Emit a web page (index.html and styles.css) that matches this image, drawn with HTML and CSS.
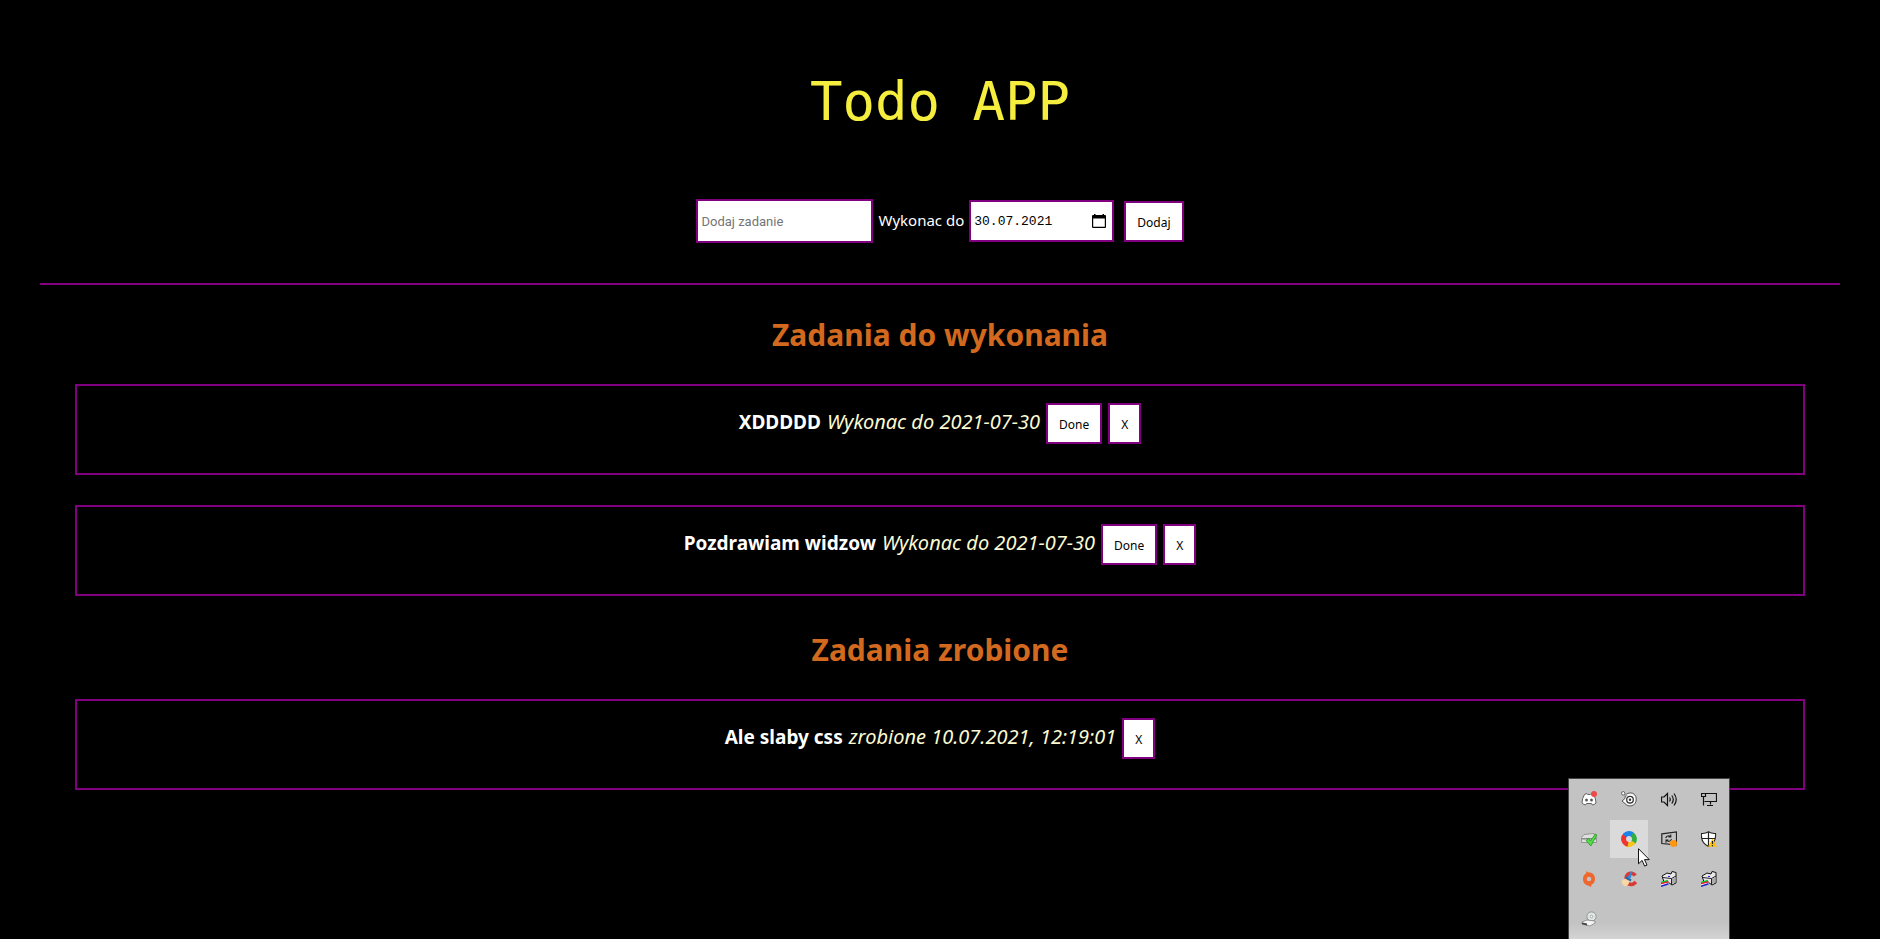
FILE: index.html
```html
<!DOCTYPE html>
<html lang="pl">
<head>
<meta charset="utf-8">
<title>Todo APP</title>
<link rel="stylesheet" href="styles.css">
</head>
<body>
<main class="app">
  <h1 class="title">Todo APP</h1>
  <form class="add-form">
    <input class="field task-input" type="text" placeholder="Dodaj zadanie" aria-label="Dodaj zadanie">
    <label class="date-label" for="deadline">Wykonac do</label>
    <span class="field date-field">
      <input class="date-input" id="deadline" type="text" value="30.07.2021">
      <button class="picker" type="button" aria-label="Kalendarz">
        <svg class="picker-icon" viewBox="0 0 14 15"><path fill="#000" fill-rule="evenodd" d="M2 0h1.500v1h7V0H12v1h1q1 0 1 1v11q0 1-1 1H1q-1 0-1-1V2q0-1 1-1h1zM1.200 4.500v8.300h11.600V4.500z"/></svg>
      </button>
    </span>
    <button class="btn add-btn" type="button">Dodaj</button>
  </form>

  <section class="group">
    <h2 class="heading">Zadania do wykonania</h2>
    <ul class="tasks">
      <li class="task"><strong class="name">XDDDDD</strong><em class="when">Wykonac do 2021-07-30</em><button class="btn" type="button">Done</button><button class="btn" type="button">X</button></li>
      <li class="task"><strong class="name">Pozdrawiam widzow</strong><em class="when">Wykonac do 2021-07-30</em><button class="btn" type="button">Done</button><button class="btn" type="button">X</button></li>
    </ul>
  </section>
  <section class="group">
    <h2 class="heading">Zadania zrobione</h2>
    <ul class="tasks">
      <li class="task"><strong class="name">Ale slaby css</strong><em class="when">zrobione 10.07.2021, 12:19:01</em><button class="btn" type="button">X</button></li>
    </ul>
  </section>
</main>

<aside class="tray">
  <span class="cell"><svg class="icon" viewBox="0 0 16 16"><path d="M3.500 3.500 6 2.500l.7 1h2.600l.7-1 2.500 1q2.500 4 2.500 8.500-1.500 1.500-3.500 2l-1-1.500h-5L4.500 14Q2.500 13.500 1 12q0-4.500 2.500-8.500z" fill="#fff" stroke="#555" stroke-width=".9"/><ellipse cx="5.500" cy="9" rx="1.400" ry="1.600" fill="#555"/><ellipse cx="10.500" cy="9" rx="1.400" ry="1.600" fill="#555"/><circle cx="13" cy="3" r="3" fill="#ee4a48"/></svg></span>
  <span class="cell"><svg class="icon" viewBox="0 0 16 16"><path d="M6.500 2.500q6-2 8.300 3 1.500 5.500-2.300 8.500-5 2.500-8.500-1.500L1 10l2.800-2.300q0-4 2.700-5.200z" fill="#fafafa" stroke="#444" stroke-width=".9"/><circle cx="9" cy="8.700" r="3.300" fill="#fff" stroke="#333" stroke-width="1.300"/><circle cx="9" cy="8.700" r="1.200" fill="#333"/><circle cx="2.200" cy="2.300" r="1.700" fill="#fff" stroke="#444" stroke-width=".8"/><circle cx="5" cy="4" r="1" fill="#fff" stroke="#555" stroke-width=".6"/></svg></span>
  <span class="cell"><svg class="icon line" viewBox="0 0 16 16"><path d="M.5 6v5H3l3.500 3.500v-12L3 6zM8.500 6.500q1.500 2 0 4M10.800 4.500q3 4 0 8M13 2.500q4.500 6 0 12"/></svg></span>
  <span class="cell"><svg class="icon line" viewBox="0 0 16 16"><path d="M4.500 2.500h11v8h-12M.5 2.500h4v3h-4zM2.500 5.500v9M9.500 10.500v3M6 14.500h6"/></svg></span>

  <span class="cell"><svg class="icon" viewBox="0 0 16 16"><path d="m3 3.500 10-1 2.500 4v5H.5v-5z" fill="#dedede" stroke="#888" stroke-width=".8"/><path d="M1 7h14v1.500H1z" fill="#888"/><path d="m5 9.500 2.500-2 2 2.500L14 3l2 1L9.800 15z" fill="#4fe044" stroke="#258a25" stroke-width=".7"/></svg></span>
  <span class="cell cell-hot"><svg class="icon" viewBox="0 0 16 16"><g fill="none" stroke-width="4.800"><path d="M2.600 9A5.500 5.500 0 0 1 4.500 3.800" stroke="#f0302c"/><path d="M3.600 4.700a5.500 5.500 0 0 1 8.300-.6" stroke="#1c83e8"/><path d="M11 3.400a5.500 5.500 0 0 1 1 8.400" stroke="#2fae41"/><path d="M12.600 11a5.500 5.500 0 0 1-7.300 1.800" stroke="#f8c51b"/><path d="M7 13.400A5.500 5.500 0 0 1 2.600 8" stroke="#ed3730"/></g></svg>
    <svg class="cursor" viewBox="0 0 12 19"><path d="M.5.7v15.100l3.600-3.400 2.500 5.700 2.400-1-2.500-5.500h4.800z" fill="#fff" stroke="#111"/></svg></span>
  <span class="cell"><svg class="icon" viewBox="0 0 16 16"><path d="m.8 2.800 14.700-2v13L.8 12.500z" fill="none" stroke="#222" stroke-width="1.200"/><path d="M4.700 7q.6-2.300 3.300-2.200l1.500 1M9.800 3.500V6H7.500M10.500 8q-.6 2.600-3.300 2.300L5.500 9.300M5 11.800V9h2.300" fill="none" stroke="#222" stroke-width="1.100"/><circle cx="12.500" cy="12.500" r="3.500" fill="#ff970f"/></svg></span>
  <span class="cell"><svg class="icon" viewBox="0 0 16 16"><path d="M7.500.8q3 2 7 1.700 1 9-7 13-8-4-7-13 4 .3 7-1.700z" fill="#fff" stroke="#222" stroke-width="1.100"/><path d="M7.500 1v14M1 7.500h13" stroke="#222" stroke-width="1.200"/><path d="m11.500 7.500 4.500 8.300H7z" fill="#ffc20e"/><path d="M11.500 10v3M11.500 14v1.200" stroke="#222" stroke-width="1.200"/></svg></span>

  <span class="cell"><svg class="icon" viewBox="0 0 16 16"><path d="M5 0q1.500 1.500 4 1.600 5 1.200 5 6.400 0 4-3.600 5.700L10 16q-1.500-1.400-4-1.800Q2 13 2 8q0-4 3.300-5.800z" fill="#ed672f"/><circle cx="8" cy="8" r="2.300" fill="#c3c3c3"/></svg></span>
  <span class="cell"><svg class="icon" viewBox="0 0 16 16"><path d="M14.300 4.500Q12.500 2 9.500 2.200 5 3 5 8q.5 5 5 5.500 2.800 0 5-2.500" fill="none" stroke="#d83a35" stroke-width="3.600"/><path d="M9.800.8h1.800L9.500 7.500l-3-1z" fill="#2c88d8"/><path d="m4.500 6.500 5.500 3" stroke="#2268af" stroke-width="2.400"/><path d="M4 7.500.3 10q.5 4.500 4.700 5.500 3-1.500 3.800-5.300z" fill="#f6d7a5"/></svg></span>
  <span class="cell"><svg class="icon" viewBox="0 0 16 16"><path d="m1 5 5-3 4 1 1-2.500 4 1V12l-4 2-4-3H3z" fill="#e8e8e8" stroke="#111"/><path d="m1.500 6.500 9 1L15 5M10.500 7.500v6" fill="none" stroke="#222"/><path d="m11 8 3.500-2v5.500L11 13z" fill="#aaa"/><path d="m0 11.500 7-2" stroke="#0c3" stroke-width="1.600"/><path d="m0 12.800 7.500-2" stroke="#e22" stroke-width="1.500"/><path d="m0 14 8-2" stroke="#fff"/><path d="m0 15.200 7.500-2.500" stroke="#22c" stroke-width="1.500"/><path d="M7 5.500h2" stroke="#22e" stroke-width="1.200"/></svg></span>
  <span class="cell"><svg class="icon" viewBox="0 0 16 16"><path d="m1 5 5-3 4 1 1-2.500 4 1V12l-4 2-4-3H3z" fill="#e8e8e8" stroke="#111"/><path d="m1.500 6.500 9 1L15 5M10.500 7.500v6" fill="none" stroke="#222"/><path d="m11 8 3.500-2v5.500L11 13z" fill="#aaa"/><path d="m0 11.500 7-2" stroke="#0c3" stroke-width="1.600"/><path d="m0 12.800 7.500-2" stroke="#e22" stroke-width="1.500"/><path d="m0 14 8-2" stroke="#fff"/><path d="m0 15.200 7.500-2.500" stroke="#22c" stroke-width="1.500"/><path d="M7 5.500h2" stroke="#22e" stroke-width="1.200"/></svg></span>

  <span class="cell"><svg class="icon" viewBox="0 0 16 16"><circle cx="10.500" cy="5.500" r="4.600" fill="#e3e8e6" stroke="#8d9492"/><circle cx="10.500" cy="5.500" r="1.300" fill="#fff" stroke="#9aa"/><path d="m1 11 5-2 8 1v2l-5 3-8-2z" fill="#f3f3f3" stroke="#777" stroke-width=".7"/><path d="m1 11.500 5 1v2l-5-1.200z" fill="#444"/></svg></span>
</aside>
</body>
</html>
```
FILE: styles.css
```css
* { box-sizing: border-box; }

body {
  margin: 0;
  min-height: 100vh;
  overflow: hidden;
  background: #000;
  color: #fff;
  font-family: "Noto Sans", "Open Sans", sans-serif;
}

.app { padding: 0 40px; }

.title {
  margin: 0;
  padding: 66px 0 61px;
  color: #f5ee3f;
  font: 400 54px/72px "DejaVu Sans Mono", monospace;
  text-align: center;
}

.add-form {
  display: flex;
  justify-content: center;
  align-items: center;
  gap: 4px;
  padding-bottom: 40px;
  border-bottom: 2px solid purple;
}

.field {
  border: 2px solid purple;
  background: #fff;
  color: #000;
}

.task-input {
  width: 177px;
  height: 44px;
  padding: 0 3px;
  font: 13px Roboto, sans-serif;
}
.task-input::placeholder { color: #757575; }

.date-label {
  padding: 0 1px 3px;
  font-size: 15px;
  line-height: 24px;
}

.date-field {
  display: flex;
  align-items: center;
  width: 145px;
  height: 42px;
  padding: 0 6px 0 3px;
}

.date-input {
  flex: 1;
  min-width: 0;
  padding: 0;
  border: 0;
  background: none;
  color: #000;
  font: 13px "Liberation Mono", monospace;
}

.picker {
  display: flex;
  padding: 0;
  border: 0;
  background: none;
}
.picker-icon { width: 14px; height: 15px; }

.btn {
  padding: 11px 11px 9px;
  border: 2px solid purple;
  background: #fff;
  color: #000;
  font: 400 12px/17px "Noto Sans", "Open Sans", sans-serif;
}
.add-btn { margin-left: 6px; }

.heading {
  margin: 0;
  padding: 28px 0 27px;
  color: chocolate;
  font-size: 30px;
  line-height: 44px;
  text-align: center;
}
.group + .group .heading { padding-top: 32px; }

.tasks {
  display: flex;
  flex-direction: column;
  gap: 30px;
  margin: 0;
  padding: 0 35px;
  list-style: none;
}

.task {
  display: flex;
  justify-content: center;
  align-items: baseline;
  gap: 6px;
  padding: 17px 20px 29px;
  border: 2px solid purple;
  font-size: 20px;
  line-height: 27px;
}
.name { font-size: 19px; }
.when { color: #fafad2; }

.tray {
  position: fixed;
  right: 150px;
  bottom: 0;
  display: grid;
  grid-template-columns: repeat(4, 40px);
  grid-auto-rows: 40px;
  border: 1px solid #444;
  border-bottom: 0;
  background: linear-gradient(#c3c3c3 90%, #d4d4d4);
}

.cell {
  position: relative;
  display: flex;
  align-items: center;
  justify-content: center;
}
.cell-hot { background: #dadada; margin: 1px; }

.icon { width: 16px; height: 16px; }
.line { fill: none; stroke: #111; stroke-width: 1.2; }

.cursor {
  position: absolute;
  left: 28px;
  top: 28px;
  z-index: 1;
  width: 12px;
  height: 19px;
}
```
